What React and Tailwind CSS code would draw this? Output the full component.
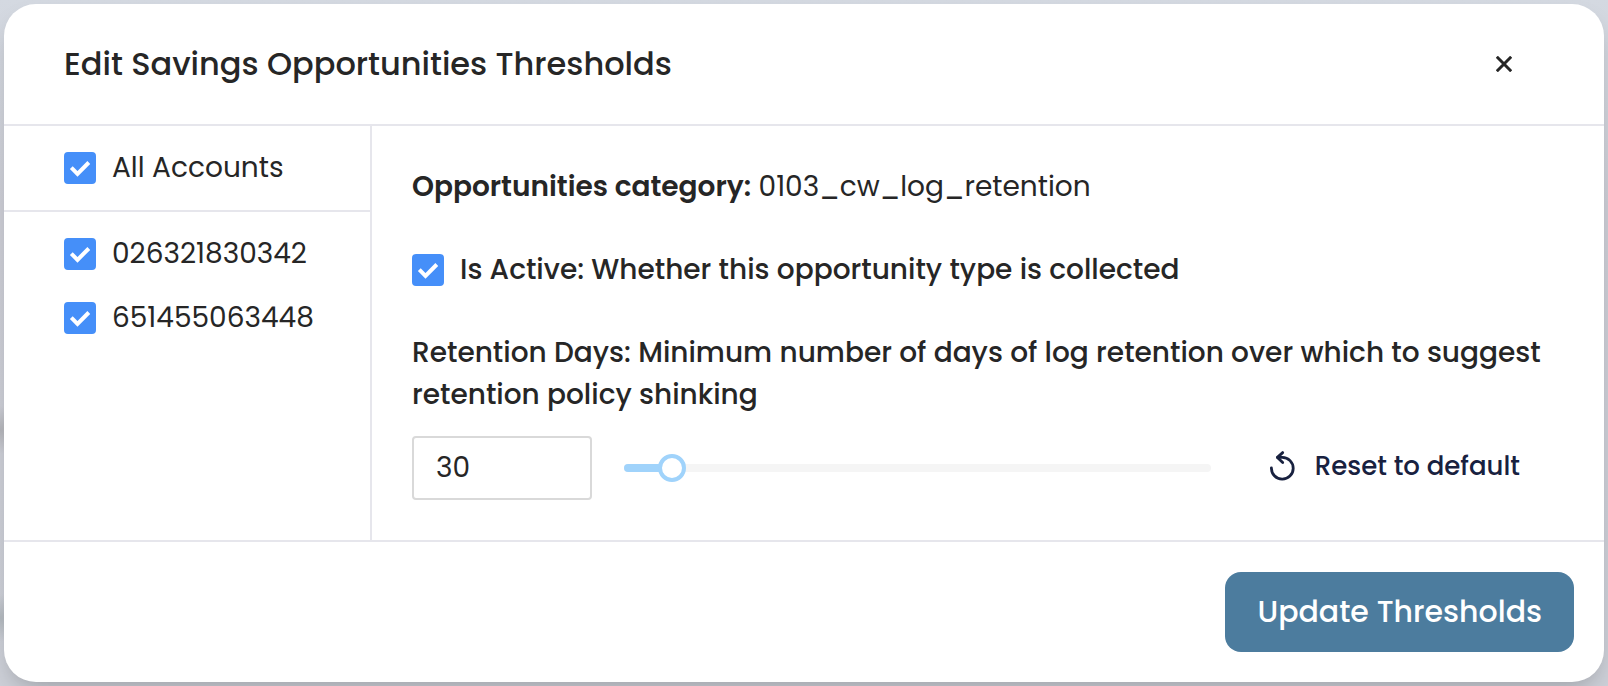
import { useState } from "react";

const ACCOUNTS = ["026321830342", "651455063448"];
const MAX_DAYS = 365;
const DEFAULT_DAYS = 30;

function Checkbox({ label, checked, onChange, labelClass = "" }) {
  return (
    <label className="flex cursor-pointer items-center gap-4">
      <span className="grid size-8 shrink-0">
        <input
          type="checkbox"
          checked={checked}
          onChange={(e) => onChange(e.target.checked)}
          className="peer col-start-1 row-start-1 size-8 appearance-none rounded border-2 border-[#d9d9d9] bg-white checked:border-[#458ff9] checked:bg-[#458ff9]"
        />
        <svg
          viewBox="0 0 32 32"
          fill="none"
          stroke="white"
          strokeWidth="4"
          aria-hidden="true"
          className="pointer-events-none invisible col-start-1 row-start-1 size-8 peer-checked:visible"
        >
          <path d="M7.3 15.6 L13.5 21.8 L24.8 10.5" />
        </svg>
      </span>
      <span className={labelClass}>{label}</span>
    </label>
  );
}

export default function App() {
  const [selected, setSelected] = useState(ACCOUNTS);
  const [active, setActive] = useState(true);
  const [days, setDays] = useState(DEFAULT_DAYS);

  const toggle = (id, on) =>
    setSelected((prev) => (on ? [...prev, id] : prev.filter((a) => a !== id)));

  return (
    <div className="min-h-screen bg-[radial-gradient(circle_at_0_430px,#b4b5ba_0,transparent_24px),radial-gradient(circle_at_0_618px,#b3b9bf_0,transparent_24px),linear-gradient(#d4d9e1,#cdced6_30%,#cdd0d8)] p-1 font-['Poppins','Inter',sans-serif] text-[28px] leading-[42px] text-[#262626]">
      <section
        role="dialog"
        aria-labelledby="dialog-title"
        className="rounded-[32px] bg-white shadow-[0_12px_24px_-8px_rgba(0,0,0,0.25)]"
      >
        <header className="flex items-center justify-between border-b-2 border-[#e6e6ec] py-9 pr-20 pl-15">
          <h1 id="dialog-title" className="text-[32px] leading-12 font-medium">
            Edit Savings Opportunities Thresholds
          </h1>
          <button type="button" aria-label="Close" className="flex size-10 items-center justify-center">
            <svg
              viewBox="0 0 16 16"
              fill="none"
              stroke="currentColor"
              strokeWidth="3"
              className="size-4"
            >
              <path d="M0.8 0.8 L15.2 15.2 M15.2 0.8 L0.8 15.2" />
            </svg>
          </button>
        </header>

        <div className="flex border-b-2 border-[#e6e6ec]">
          <aside className="w-92 shrink-0 border-r-2 border-[#e6e6ec]">
            <div className="border-b-2 border-[#e6e6ec] py-[21px] pl-15">
              <Checkbox
                label="All Accounts"
                checked={selected.length === ACCOUNTS.length}
                onChange={(on) => setSelected(on ? ACCOUNTS : [])}
              />
            </div>
            <div className="flex flex-col gap-[22px] py-[21px] pl-15">
              {ACCOUNTS.map((id) => (
                <Checkbox
                  key={id}
                  label={id}
                  checked={selected.includes(id)}
                  onChange={(on) => toggle(id, on)}
                />
              ))}
            </div>
          </aside>

          <main className="flex min-w-0 flex-1 flex-col gap-[41px] p-10">
            <p>
              <strong className="font-semibold">Opportunities category:</strong> 0103_cw_log_retention
            </p>
            <Checkbox
              label="Is Active: Whether this opportunity type is collected"
              checked={active}
              onChange={setActive}
              labelClass="font-medium"
            />
            <div className="flex flex-col gap-5">
              <label htmlFor="days" className="font-medium">
                Retention Days: Minimum number of days of log retention over which to suggest
                retention policy shinking
              </label>
              <div className="flex items-center">
                <input
                  id="days"
                  type="number"
                  min="0"
                  max={MAX_DAYS}
                  value={days}
                  onChange={(e) => setDays(Number(e.target.value))}
                  className="h-16 w-45 appearance-none rounded border-2 border-[#d9d9d9] px-[22px] [-moz-appearance:textfield] [&::-webkit-inner-spin-button]:appearance-none"
                />
                <div className="relative mx-8 flex-1">
                  <div className="h-2 overflow-hidden rounded-full bg-[#f5f5f5]">
                    <div className="h-full bg-[#a0d3fb]" style={{ width: `${(days / MAX_DAYS) * 100}%` }} />
                  </div>
                  <input
                    type="range"
                    aria-label="Retention Days"
                    min="0"
                    max={MAX_DAYS}
                    value={days}
                    onChange={(e) => setDays(Number(e.target.value))}
                    className="absolute -inset-x-3.5 -top-2.5 h-7 w-[calc(100%+28px)] cursor-pointer appearance-none bg-transparent [&::-webkit-slider-thumb]:size-7 [&::-webkit-slider-thumb]:appearance-none [&::-webkit-slider-thumb]:rounded-full [&::-webkit-slider-thumb]:border-4 [&::-webkit-slider-thumb]:border-[#a0d3fb] [&::-webkit-slider-thumb]:bg-white"
                  />
                </div>
                <button
                  type="button"
                  onClick={() => setDays(DEFAULT_DAYS)}
                  className="flex items-center gap-4 pt-1 pr-11 pb-2 pl-6 text-[26px] leading-10 font-medium text-[#18213f]"
                >
                  <svg
                    viewBox="0 0 32 32"
                    fill="none"
                    stroke="currentColor"
                    strokeWidth="2.8"
                    strokeLinecap="round"
                    strokeLinejoin="round"
                    aria-hidden="true"
                    className="size-8"
                  >
                    <path d="M4.4 18 A10.9 10.9 0 1 0 15.3 7.4 H10.6" />
                    <path d="M15.7 2.6 L10.4 7.4 L15.7 12.6" />
                  </svg>
                  Reset to default
                </button>
              </div>
            </div>
          </main>
        </div>

        <footer className="flex justify-end p-[30px]">
          <button
            type="button"
            className="h-20 rounded-2xl bg-[#4c7c9e] px-8 text-[30px] font-medium text-white"
          >
            Update Thresholds
          </button>
        </footer>
      </section>
    </div>
  );
}
